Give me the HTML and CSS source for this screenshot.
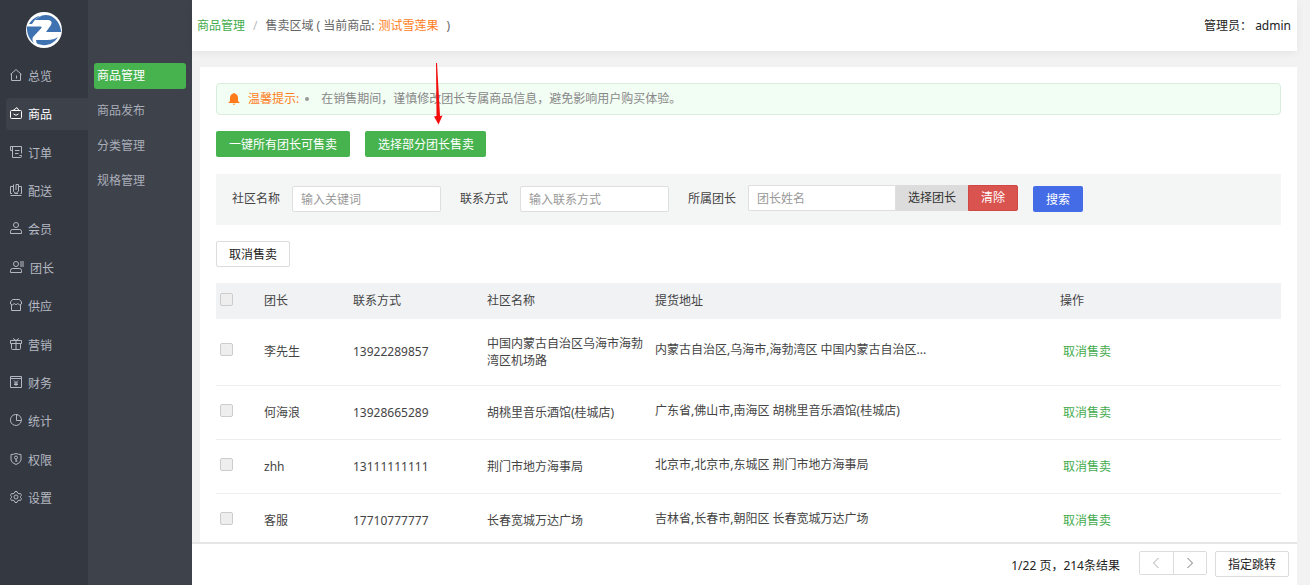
FILE: index.html
```html
<!DOCTYPE html>
<html lang="zh-CN">
<head>
<meta charset="utf-8">
<title>商品管理 - 售卖区域</title>
<link rel="stylesheet" href="styles.css">
</head>
<body>
<div class="app">
  <aside class="sidebar">
    <svg class="logo" viewBox="0 0 36 36" aria-hidden="true">
      <circle cx="18" cy="18" r="18" fill="#fff"/>
      <path d="M3 12C6 7 11 4 14 4Q11 5.500 8 9L6 12Z" fill="#3f72b0"/>
      <path d="M16 3.500C24 1 34 7 35.200 20H20L25 13C26.500 9.500 25 8 21 8H9Q12 5 16 3.500Z" fill="#3f72b0"/>
      <path d="M1 14.500H14.500Q16.500 14.500 15 16.500L7 25Q5.500 28 8 31C3 27 .5 21 1 14.500Z" fill="#3f72b0"/>
      <path d="M10 28H21Q28 28 32 25C28 32 20 35 12 32Q10 31 10 28Z" fill="#3f72b0"/>
    </svg>
    <nav class="menu">
      <a class="menu-item" href="#"><svg class="icon" viewBox="0 0 12 12"><path d="M1.500 11.500H10.500V4.500L6 .6L1.500 4.500ZM.5 5.300L1.500 4.500M11.500 5.300L10.500 4.500M6.500 6.500V9.500"/></svg>总览</a>
      <a class="menu-item active" href="#"><svg class="icon" viewBox="0 0 12 12"><path d="M1.500 3.500H10.500Q11.500 3.500 11.500 4.500V10.500Q11.500 11.500 10.500 11.500H1.500Q.5 11.500 .5 10.500V4.500Q.5 3.500 1.500 3.500ZM3 3.500L7 .6L9 3.500M3.500 7Q6 9.500 8.500 7"/></svg>商品</a>
      <a class="menu-item" href="#"><svg class="icon" viewBox="0 0 12 12"><path d="M2.500 4.500H.5V.5H11.500V7.500M2.500 .5V11.500H10.500Q11.500 11.500 11.500 10.500V9.500H9.500M5 4.500H9.500M5 7.500H8.500"/></svg>订单</a>
      <a class="menu-item" href="#"><svg class="icon" viewBox="0 0 12 12"><path d="M4 2.500H.5V9.500H2M3.500 .5V7.500L6 9.500L8.500 7V.5H6V6M8.500 2.500H11.500V9.500H10.500M.5 11.500H11.500M4.500 9.500H8"/></svg>配送</a>
      <a class="menu-item" href="#"><svg class="icon" viewBox="0 0 12 12"><circle cx="6" cy="3" r="2.500"/><path d="M2.500 7.500H9.500Q11.500 7.500 11.500 9.500V11.500H.5V9.500Q.5 7.500 2.500 7.500Z"/></svg>会员</a>
      <a class="menu-item" href="#"><svg class="icon wide" viewBox="0 0 14 12"><circle cx="6" cy="3" r="2.500"/><path d="M2.500 7.500H9.500Q11.500 7.500 11.500 9.500V11.500H.5V9.500Q.5 7.500 2.500 7.500Z"/><path d="M10 1H14M10 3H14M10 5H14" stroke-width="1.500" opacity=".7"/></svg>团长</a>
      <a class="menu-item" href="#"><svg class="icon" viewBox="0 0 12 12"><path d="M2.500 .5H9.500L11.500 3V5Q9.500 7 7.700 4.500Q6 7 4.300 4.500Q2.500 7 .5 5V3ZM1.500 6V11.500H10.500V6"/></svg>供应</a>
      <a class="menu-item" href="#"><svg class="icon" viewBox="0 0 12 12"><path d="M.5 2.500H11.500V5.500H.5ZM1.500 5.500V10.500Q1.500 11.500 2.500 11.500H9.500Q10.500 11.500 10.500 10.500V5.500M6 2.500V11.500M6 2.500L3 .5M6 2.500L9 .5"/></svg>营销</a>
      <a class="menu-item" href="#"><svg class="icon" viewBox="0 0 12 12"><path d="M.5 .5H11.500V11.500H.5ZM.5 2.500H11.500M4 4.500L6 6.500L8 4.500M6 6.500V10M4 7H8M4 8.500H8"/></svg>财务</a>
      <a class="menu-item" href="#"><svg class="icon" viewBox="0 0 12 12"><path d="M7.500 .7A5.500 5.500 0 1 0 11.300 7M6.500 .5V6.500H11.500Q11.500 1.500 6.500 .5Z"/></svg>统计</a>
      <a class="menu-item" href="#"><svg class="icon" viewBox="0 0 12 12"><path d="M6 .5Q3.500 1.500 1 1.500V7Q1.500 10 6 11.500Q10.500 10 11 7V1.500Q8.500 1.500 6 .5Z"/><circle cx="6" cy="4.500" r="1.500"/><path d="M6 6V9M6 8H7.500"/></svg>权限</a>
      <a class="menu-item" href="#"><svg class="icon" viewBox="0 0 12 12"><path d="M4.500 2L5 .5H7L7.500 2L9 2.800L10.500 2.500L11.500 4.300L10.500 5.500V6.500L11.500 7.700L10.500 9.500L9 9.200L7.500 10L7 11.500H5L4.500 10L3 9.200L1.500 9.500L.5 7.700L1.500 6.500V5.500L.5 4.300L1.500 2.500L3 2.800Z"/><circle cx="6" cy="6" r="2"/></svg>设置</a>
    </nav>
  </aside>
  <nav class="submenu">
    <a class="submenu-item active" href="#">商品管理</a>
    <a class="submenu-item" href="#">商品发布</a>
    <a class="submenu-item" href="#">分类管理</a>
    <a class="submenu-item" href="#">规格管理</a>
  </nav>
  <div class="main">
    <header class="topbar">
      <div class="breadcrumb">
        <a href="#">商品管理</a>
        <span class="slash">/</span>
        <span>售卖区域 ( 当前商品: </span>
        <em>测试雪莲果</em>
        <span>)</span>
      </div>
      <div class="admin">管理员： <span>admin</span></div>
    </header>
    <main class="content">
      <section class="card">
        <div class="tip">
          <svg class="bell" viewBox="0 0 12 12" aria-hidden="true"><path d="M5 .5Q6 -.5 7 .5Q10 1.500 10 5V8L11.500 9.500V10H.5V9.500L2 8V5Q2 1.500 5 .5ZM4.500 10.700H7.500Q6 12.800 4.500 10.700Z"/></svg>
          <strong class="tip-title">温馨提示:</strong>
          <span class="dot"></span>
          <span>在销售期间，谨慎修改团长专属商品信息，避免影响用户购买体验。</span>
        </div>
        <div class="actions">
          <button class="btn green" type="button">一键所有团长可售卖</button>
          <button class="btn green" type="button">选择部分团长售卖</button>
          <svg class="pointer" viewBox="0 0 10 62" aria-hidden="true"><path d="M3 0H4L7 53L9.500 52.500L5.500 61.500L1 53.500L3.500 53Z"/></svg>
        </div>
        <form class="filter">
          <div class="field">
            <label for="community">社区名称</label>
            <input id="community" type="text" placeholder="输入关键词">
          </div>
          <div class="field">
            <label for="contact">联系方式</label>
            <input id="contact" type="text" placeholder="输入联系方式">
          </div>
          <div class="field last">
            <label for="leader">所属团长</label>
            <div class="group">
              <input id="leader" type="text" placeholder="团长姓名">
              <button class="btn grey" type="button">选择团长</button>
              <button class="btn red" type="button">清除</button>
            </div>
          </div>
          <button class="btn blue" type="button">搜索</button>
        </form>
        <div class="batch">
          <button class="btn plain" type="button">取消售卖</button>
        </div>
        <table class="list">
          <colgroup><col class="c-check"><col class="c-name"><col class="c-phone"><col class="c-community"><col><col class="c-op"></colgroup>
          <thead>
            <tr><th class="raised"><input type="checkbox" aria-label="全选"></th><th>团长</th><th>联系方式</th><th>社区名称</th><th>提货地址</th><th>操作</th></tr>
          </thead>
          <tbody>
            <tr class="tall"><td class="raised"><input type="checkbox" aria-label="选择李先生"></td><td>李先生</td><td>13922289857</td><td>中国内蒙古自治区乌海市海勃湾区机场路</td><td class="raised">内蒙古自治区,乌海市,海勃湾区 中国内蒙古自治区...</td><td class="op"><a href="#">取消售卖</a></td></tr>
            <tr><td class="raised"><input type="checkbox" aria-label="选择何海浪"></td><td>何海浪</td><td>13928665289</td><td>胡桃里音乐酒馆(桂城店)</td><td class="raised">广东省,佛山市,南海区 胡桃里音乐酒馆(桂城店)</td><td class="op"><a href="#">取消售卖</a></td></tr>
            <tr><td class="raised"><input type="checkbox" aria-label="选择zhh"></td><td>zhh</td><td>13111111111</td><td>荆门市地方海事局</td><td class="raised">北京市,北京市,东城区 荆门市地方海事局</td><td class="op"><a href="#">取消售卖</a></td></tr>
            <tr><td class="raised"><input type="checkbox" aria-label="选择客服"></td><td>客服</td><td>17710777777</td><td>长春宽城万达广场</td><td class="raised">吉林省,长春市,朝阳区 长春宽城万达广场</td><td class="op"><a href="#">取消售卖</a></td></tr>
          </tbody>
        </table>
      </section>
    </main>
    <footer class="pagination">
      <span class="total">1/22 页，214条结果</span>
      <div class="pager">
        <button type="button" aria-label="上一页"><svg viewBox="0 0 8 12"><path d="M6.500 1L1.500 6L6.500 11"/></svg></button>
        <button type="button" aria-label="下一页"><svg class="next" viewBox="0 0 8 12"><path d="M1.500 1L6.500 6L1.500 11"/></svg></button>
      </div>
      <button class="btn plain" type="button">指定跳转</button>
    </footer>
  </div>
</div>
</body>
</html>
```
FILE: styles.css
```css
* {
  box-sizing: border-box;
}

body {
  margin: 0;
  background: #f2f2f2;
  color: #444;
  font: 12px/18px "Noto Sans", "Noto Sans CJK SC", sans-serif;
}

a {
  color: #44ab4d;
  text-decoration: none;
}

button,
input {
  font: inherit;
  margin: 0;
}

.app {
  display: flex;
  height: 100vh;
  overflow: hidden;
}

/* Primary navigation */
.sidebar {
  display: flex;
  flex-direction: column;
  flex: none;
  width: 88px;
  padding: 12px 0 71px 6px;
  background: #343841;
}

.logo {
  flex: none;
  width: 36px;
  height: 36px;
  margin: 0 20px 12px;
}

.menu {
  display: flex;
  flex: 1;
  flex-direction: column;
  justify-content: space-between;
}

.menu-item {
  display: flex;
  align-items: center;
  gap: 6px;
  height: 32px;
  padding: 2px 0 0 4px;
  border-radius: 4px 0 0 4px;
  color: #b4b8c2;
}

.menu-item.active {
  background: #3d414a;
  color: #fff;
}

.icon {
  flex: none;
  width: 12px;
  height: 12px;
  margin-bottom: 4px;
  fill: none;
  stroke: currentColor;
}

.icon.wide {
  width: 14px;
}

/* Secondary navigation */
.submenu {
  display: flex;
  flex-direction: column;
  flex: none;
  gap: 9px;
  width: 104px;
  padding: 63px 6px 0;
  background: #3e424b;
}

.submenu-item {
  padding: 4px 3px;
  border-radius: 3px;
  color: #a9adb8;
}

.submenu-item.active {
  background: #47b34f;
  color: #fff;
}

/* Page area */
.main {
  display: flex;
  flex: 1;
  flex-direction: column;
  min-width: 0;
  margin-right: 13px;
}

.topbar {
  display: flex;
  align-items: center;
  justify-content: space-between;
  flex: none;
  height: 51px;
  padding: 0 6px 0 5px;
  background: #fff;
  box-shadow: 0 2px 8px rgba(0, 0, 0, 0.06);
}

.breadcrumb {
  display: flex;
  color: #666;
}

.breadcrumb em {
  margin: 0 8px 0 4px;
  color: #ff7d22;
  font-style: normal;
}

.slash {
  margin: 0 8px;
  color: #bbb;
}

.admin {
  color: #222;
}

.content {
  flex: 1;
  min-height: 0;
  overflow: hidden;
  padding: 16px 0 0 8px;
}

.card {
  padding: 16px;
  background: #fff;
}

.tip {
  display: flex;
  align-items: center;
  height: 32px;
  padding: 0 11px;
  border: 1px solid #d8eddb;
  border-radius: 4px;
  background: #f2fdf4;
  color: #888;
}

.bell {
  width: 12px;
  height: 12px;
  margin-right: 8px;
  fill: #ff7a1a;
}

.tip-title {
  color: #ff7d22;
  font-weight: 400;
}

.dot {
  width: 4px;
  height: 4px;
  margin: 0 12px 0 6px;
  border-radius: 50%;
  background: #999;
}

.actions {
  position: relative;
  display: flex;
  gap: 15px;
  margin-top: 16px;
}

.pointer {
  position: absolute;
  left: 217px;
  bottom: 32px;
  width: 10px;
  height: 62px;
  fill: #f30d0d;
}

.btn {
  height: 26px;
  padding: 1px 12px 0;
  border: 1px solid transparent;
  border-radius: 2px;
  line-height: 24px;
  white-space: nowrap;
}

.btn.green {
  padding: 1px 11px 0 12px;
  background: #47b34f;
  color: #fff;
}

.btn.green:first-child {
  padding-right: 12px;
}

.btn.grey {
  padding: 0 12px;
  border-width: 1px 0;
  border-radius: 0;
  background: #dcdcdc;
  color: #333;
}

.btn.red {
  padding: 0 12px;
  border-color: #d14743;
  border-radius: 0 2px 2px 0;
  background: #d9534f;
  color: #fff;
}

.btn.blue {
  background: #446ce6;
  color: #fff;
}

.btn.plain {
  padding: 1px 12px 0;
  border-color: #dcdcdc;
  background: #fff;
  color: #222;
}

.filter {
  display: flex;
  align-items: center;
  margin-top: 17px;
  padding: 11px 16px 12px;
  background: #f4f6f6;
}

.field {
  display: flex;
  align-items: center;
  gap: 12px;
  margin-right: 19px;
}

.field.last {
  margin-right: 15px;
}

.field input {
  width: 149px;
  height: 26px;
  padding: 0 8px;
  border: 1px solid #dedede;
  border-radius: 2px;
  background: #fff;
  color: #444;
}

.field input::placeholder {
  color: #999;
}

.field .group {
  display: flex;
  margin-bottom: 2px;
}

.field .group input {
  width: 148px;
  border-radius: 2px 0 0 2px;
}

.batch {
  margin-top: 16px;
}

.batch .btn {
  display: block;
}

/* Seller list */
.list {
  width: 100%;
  margin-top: 16px;
  border-collapse: collapse;
  table-layout: fixed;
  line-height: 17px;
}

.c-check { width: 40px; }
.c-name { width: 89px; }
.c-phone { width: 134px; }
.c-community { width: 168px; }
.c-op { width: 229px; }

.list th,
.list td {
  height: 54px;
  padding: 0 4px 0 8px;
  border-bottom: 1px solid #eee;
  text-align: left;
  vertical-align: middle;
}

.list th {
  height: 36px;
  padding-bottom: 1px;
  border: 0;
  background: #f0f2f4;
  font-weight: 400;
}

.list .tall td {
  height: 66px;
}

.list .raised {
  padding-bottom: 4px;
}

.list .raised:first-child {
  padding-left: 4px;
}

.list .op {
  padding-left: 11px;
}

.list input {
  display: block;
  width: 13px;
  height: 13px;
  border: 1px solid #ccc;
  border-radius: 2px;
  background: #eee;
  appearance: none;
}

/* Pagination */
.pagination {
  display: flex;
  align-items: flex-start;
  justify-content: flex-end;
  flex: none;
  height: 43px;
  padding: 7px 8px 0;
  border-top: 2px solid #e6e6e6;
  background: #fff;
  color: #222;
}

.total {
  margin: 6px 19px 0 0;
}

.pager {
  display: flex;
  margin-right: 8px;
  border: 1px solid #dcdcdc;
  border-radius: 2px;
}

.pager button {
  display: flex;
  align-items: center;
  justify-content: center;
  width: 33px;
  height: 22px;
  padding: 0;
  border: 0;
  background: #fff;
}

.pager button + button {
  border-left: 1px solid #dcdcdc;
}

.pager svg {
  width: 8px;
  height: 12px;
  fill: none;
  stroke: #aaa;
}

.pager .next {
  stroke: #777;
}
```
